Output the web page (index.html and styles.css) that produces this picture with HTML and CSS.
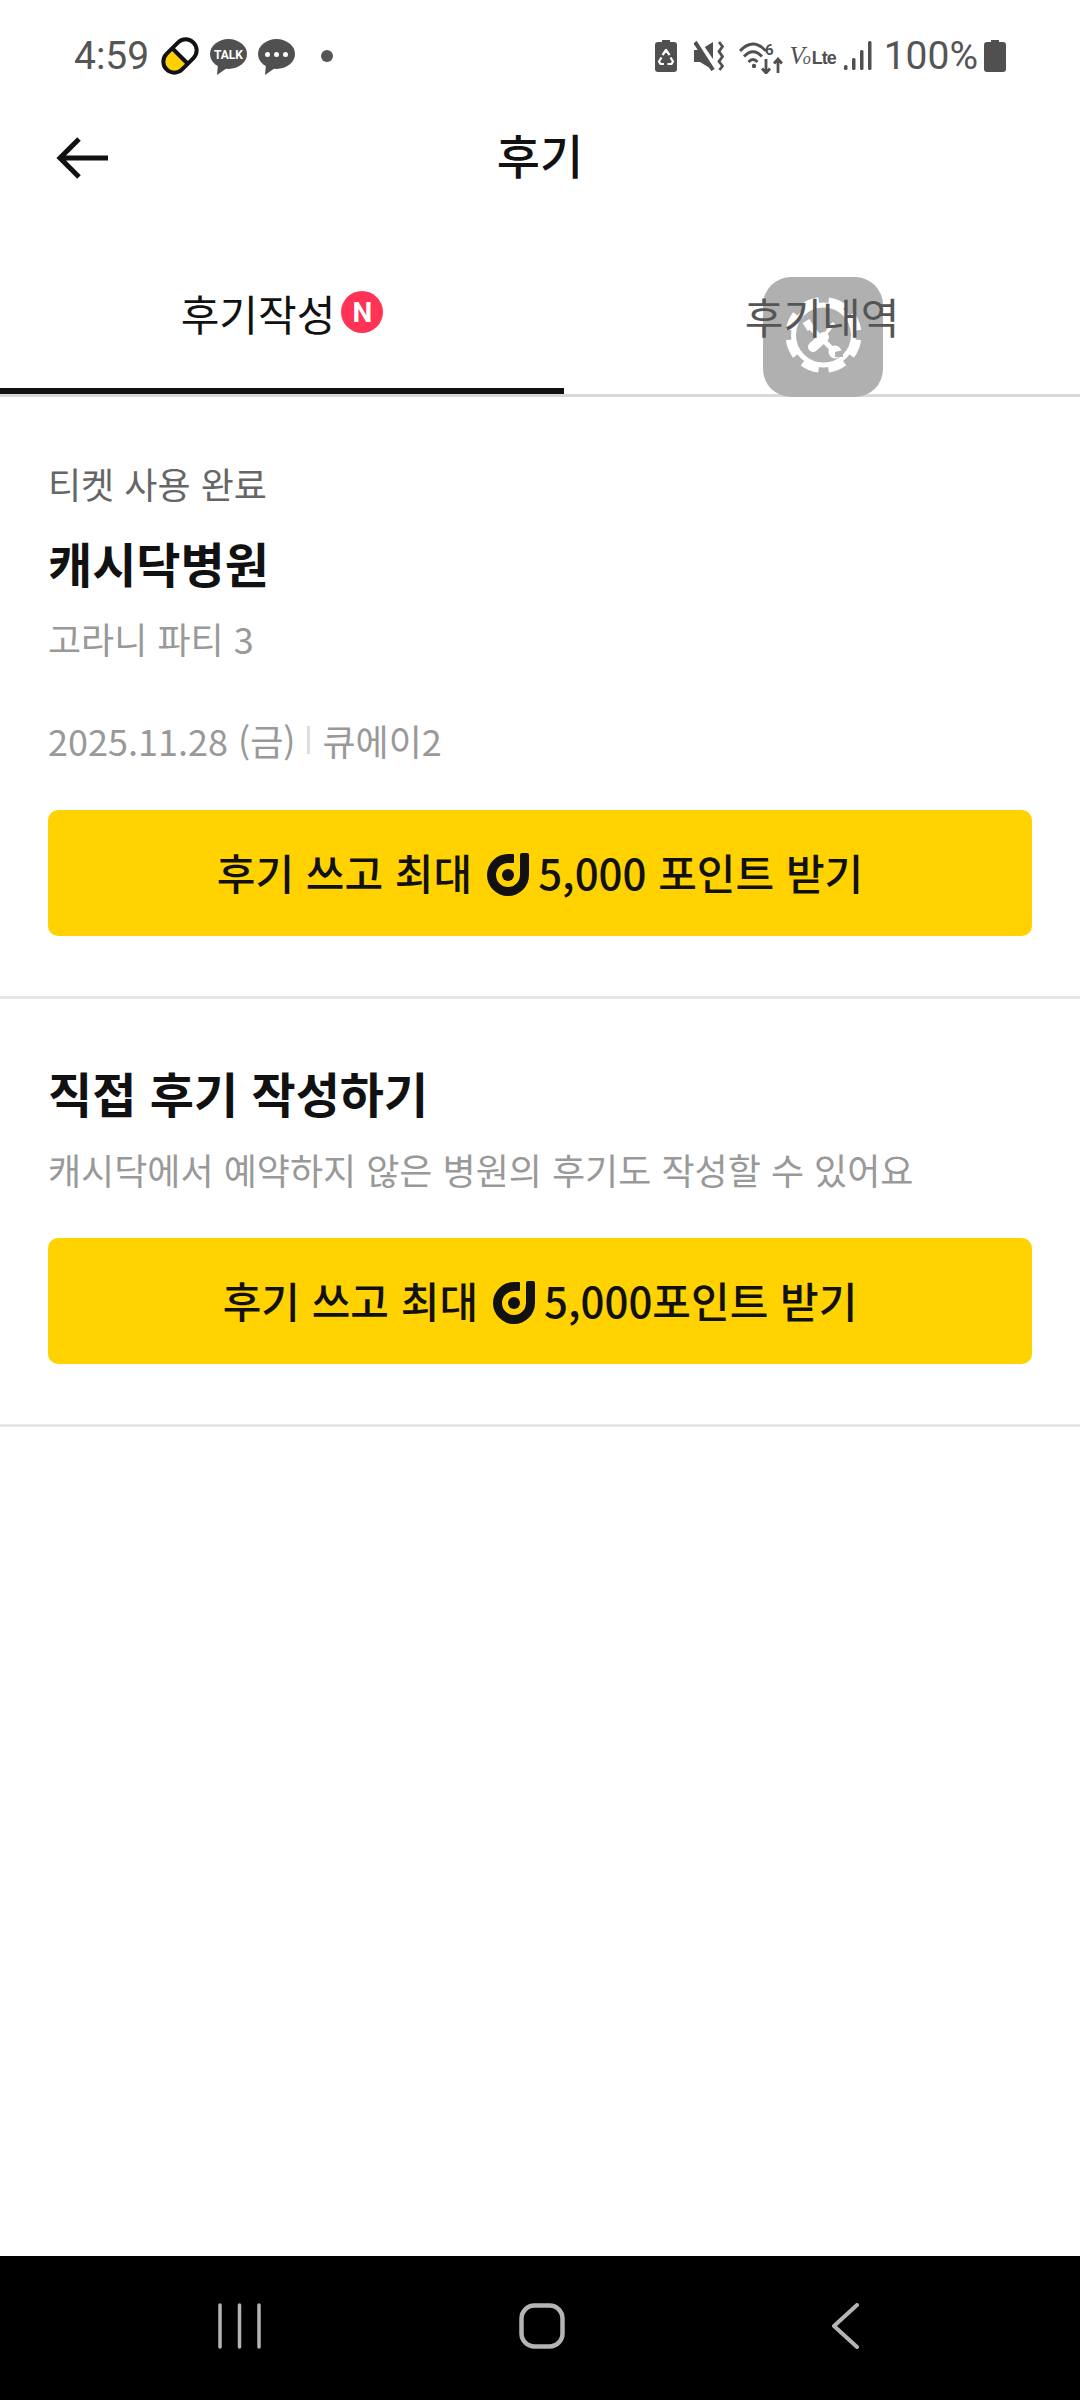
FILE: index.html
```html
<!DOCTYPE html>
<html lang="ko">
<head>
	<meta charset="utf-8">
	<title>후기</title>
	<link rel="stylesheet" href="styles.css">
</head>
<body>
	<div class="screen">
		<div class="statusBar">
			<div class="statusLeft">
				<span class="statusTime">4:59</span>
				<svg class="icon" width="38" height="40" viewBox="0 0 38 40">
					<g transform="rotate(45 19 20)">
						<rect x="8" y="1" width="22" height="38" rx="11" fill="#fff"/>
						<path d="M8 20h22v8a11 11 0 0 1-22 0z" fill="#ffd100"/>
						<rect x="8" y="1" width="22" height="38" rx="11" fill="none" stroke="#111" stroke-width="4"/>
						<path d="M8 20h22" stroke="#111" stroke-width="4"/>
					</g>
				</svg>
				<svg class="icon talkIcon" width="37" height="36" viewBox="0 0 37 36">
					<ellipse cx="18.500" cy="15" rx="18.500" ry="15" fill="#505050"/>
					<path d="M8 25l-1 11 10-7z" fill="#505050"/>
					<text x="18.500" y="19.500" text-anchor="middle" class="talkText">TALK</text>
				</svg>
				<svg class="icon talkIcon" width="37" height="36" viewBox="0 0 37 36">
					<ellipse cx="18.500" cy="15" rx="18.500" ry="15" fill="#505050"/>
					<path d="M8 25l-1 11 10-7z" fill="#505050"/>
					<circle cx="9.500" cy="15.500" r="2.500" fill="#fff"/>
					<circle cx="18.500" cy="15.500" r="2.500" fill="#fff"/>
					<circle cx="27.500" cy="15.500" r="2.500" fill="#fff"/>
				</svg>
				<span class="statusDot"></span>
			</div>
			<div class="statusRight">
				<svg class="icon" width="22" height="32" viewBox="0 0 22 32">
					<path d="M7 0h8v2h4a3 3 0 0 1 3 3v24a3 3 0 0 1-3 3H3a3 3 0 0 1-3-3V5a3 3 0 0 1 3-3h4z" fill="#505050"/>
					<path d="M7.500 15l3.500-5 3.500 5M15.500 17.500l2.500 4-1.500 2.500H12.500M9 24H5.500L4 21.500l2.500-4" fill="none" stroke="#fff" stroke-width="2.200" stroke-linejoin="round"/>
				</svg>
				<svg class="icon muteIcon" width="30" height="30" viewBox="0 0 30 30">
					<path d="M0 9h6l13-8v28L6 21H0z" fill="#505050"/>
					<path d="M3 -1l19 28" stroke="#fff" stroke-width="5"/>
					<path d="M1 1l18 28" stroke="#505050" stroke-width="4"/>
					<path d="M25 1l3.500 4.500-3.500 5 3.500 5-3.500 5 3.500 4.500-3 4" fill="none" stroke="#505050" stroke-width="2.800"/>
				</svg>
				<svg class="icon wifiIcon" width="44" height="32" viewBox="0 0 44 32">
					<path d="M1 9Q14-5 27 9M5 14.500Q14 5 23 14.500M9.500 20Q14 15 18.500 20" fill="none" stroke="#505050" stroke-width="2.800"/>
					<circle cx="15" cy="24" r="2.200" fill="#505050"/>
					<text x="26" y="13" class="wifiSix">6</text>
					<path d="M27 17v14M23 26.500l4 4.500 4-4.500M39 31V17M35 21.500l4-4.500 4 4.500" fill="none" stroke="#505050" stroke-width="2.800"/>
				</svg>
				<span class="volte"><span class="volteV">V<small>o</small></span><span class="volteLte">Lte</span></span>
				<svg class="icon signalIcon" width="28" height="30" viewBox="0 0 28 30">
					<rect x="0" y="24" width="3.500" height="5" rx="1.500" fill="#505050"/>
					<rect x="8" y="17" width="3.500" height="12" rx="1.500" fill="#505050"/>
					<rect x="16" y="9" width="3.500" height="20" rx="1.500" fill="#505050"/>
					<rect x="24" y="0" width="3.500" height="29" rx="1.500" fill="#505050"/>
				</svg>
				<span class="statusBattery">100%</span>
				<svg class="icon batteryIcon" width="22" height="32" viewBox="0 0 22 32">
					<path d="M7 0h8v2h4a3 3 0 0 1 3 3v24a3 3 0 0 1-3 3H3a3 3 0 0 1-3-3V5a3 3 0 0 1 3-3h4z" fill="#505050"/>
				</svg>
			</div>
		</div>

		<div class="topBar">
			<svg class="backArrow" width="56" height="46" viewBox="0 0 56 46">
				<path d="M53 23H5M24 4L5 23l19 19" fill="none" stroke="#111" stroke-width="5"/>
			</svg>
			<div class="pageTitle">후기</div>
		</div>

		<div class="tabs">
			<div class="tab tabActive">
				<span>후기작성</span>
				<span class="newBadge">N</span>
			</div>
			<div class="tab">
				<span class="tabLabel">후기내역</span>
			</div>
		</div>

		<div class="section ticketSection">
			<div class="ticketState">티켓 사용 완료</div>
			<div class="hospitalName">캐시닥병원</div>
			<div class="itemName">고라니 파티 3</div>
			<div class="visitInfo">
				<span>2025.11.28 (금)</span>
				<span class="visitSep"></span>
				<span>큐에이2</span>
			</div>
			<div class="reviewButton">
				<span>후기 쓰고 최대</span>
				<svg class="pointLogo" width="42" height="43" viewBox="0 0 42 43">
					<path d="M35 0h5a2 2 0 0 1 2 2v20a21 21 0 1 1-21-21h5a1 1 0 0 1 1 1v7a1 1 0 0 1-1 1h-5a12 12 0 1 0 12 12V2a2 2 0 0 1 2-2z" fill="#111"/>
					<circle cx="21" cy="22" r="6" fill="#111"/>
				</svg>
				<span>5,000 포인트 받기</span>
			</div>
		</div>

		<div class="section directSection">
			<div class="directTitle">직접 후기 작성하기</div>
			<div class="directDesc">캐시닥에서 예약하지 않은 병원의 후기도 작성할 수 있어요</div>
			<div class="reviewButton">
				<span>후기 쓰고 최대</span>
				<svg class="pointLogo" width="42" height="43" viewBox="0 0 42 43">
					<path d="M35 0h5a2 2 0 0 1 2 2v20a21 21 0 1 1-21-21h5a1 1 0 0 1 1 1v7a1 1 0 0 1-1 1h-5a12 12 0 1 0 12 12V2a2 2 0 0 1 2-2z" fill="#111"/>
					<circle cx="21" cy="22" r="6" fill="#111"/>
				</svg>
				<span>5,000포인트 받기</span>
			</div>
		</div>

		<div class="spacer"></div>

		<div class="navBar">
			<svg width="45" height="46" viewBox="0 0 45 46">
				<path d="M3 2v42M22.500 2v42M42 2v42" stroke="#b4b4b4" stroke-width="3.500" stroke-linecap="round"/>
			</svg>
			<svg class="navHome" width="46" height="46" viewBox="0 0 46 46">
				<rect x="2.500" y="2.500" width="41" height="41" rx="13" fill="none" stroke="#b4b4b4" stroke-width="4.500"/>
			</svg>
			<svg class="navBack" width="28" height="46" viewBox="0 0 28 46">
				<path d="M26 2L3 23l23 21" fill="none" stroke="#b4b4b4" stroke-width="4" stroke-linecap="round" stroke-linejoin="round"/>
			</svg>
		</div>

		<div class="floatButton">
			<svg width="120" height="120" viewBox="0 0 120 120">
				<rect width="120" height="120" rx="28" fill="#b0b0b0"/>
				<circle cx="60.500" cy="58" r="30" fill="none" stroke="#fff" stroke-width="5"/>
				<circle cx="60.500" cy="58" r="34" transform="rotate(8 60.500 58)" fill="none" stroke="#fff" stroke-width="8" stroke-dasharray="17 9.700"/>
				<path d="M47 50l24 24" stroke="#fff" stroke-width="5"/>
				<path d="M43 44l5 8" stroke="#fff" stroke-width="8"/>
				<circle cx="72" cy="75" r="6.500" fill="#fff"/>
				<path d="M72 75l8-2v7h-8z" fill="#b0b0b0"/>
				<path d="M50 70l11-10" stroke="#fff" stroke-width="10" stroke-linecap="round"/>
				<path d="M60 60l11-14" stroke="#fff" stroke-width="3.500"/>
			</svg>
		</div>
	</div>
</body>
</html>
```

FILE: styles.css
```css
html, body {
	margin: 0;
	padding: 0;
	background-color: #fff;
}

.screen {
	position: relative;
	display: flex;
	flex-direction: column;
	width: 1080px;
	height: 2400px;
	overflow: hidden;
	font-family: "Noto Sans CJK KR", "Noto Sans", sans-serif;
	color: #111;
}

.icon {
	display: block;
	flex: none;
}

/* status bar */
.statusBar {
	display: flex;
	justify-content: space-between;
	align-items: center;
	height: 112px;
	padding: 0 74px;
	box-sizing: border-box;
	font-family: Roboto, sans-serif;
	color: #555;
}

.statusLeft,
.statusRight {
	display: flex;
	align-items: center;
}

.statusTime {
	font-size: 39px;
	margin-right: 12px;
}

.talkIcon {
	margin-left: 11px;
	margin-top: 2px;
}

.talkText {
	font-family: Roboto, sans-serif;
	font-size: 12px;
	font-weight: 700;
	fill: #fff;
}

.statusDot {
	width: 12px;
	height: 12px;
	margin-left: 26px;
	border-radius: 50%;
	background-color: #555;
}

.muteIcon {
	margin-left: 17px;
}

.wifiIcon {
	margin-left: 15px;
	margin-top: 4px;
}

.wifiSix {
	font-family: Roboto, sans-serif;
	font-size: 15px;
	font-weight: 700;
	fill: #505050;
}

.volte {
	display: flex;
	align-items: baseline;
	margin-left: 6px;
	color: #505050;
}

.volteV {
	font-family: "Liberation Serif", serif;
	font-style: italic;
	font-size: 25px;
	letter-spacing: -2px;
}

.volteV small {
	font-size: 16px;
}

.volteLte {
	margin-left: 3px;
	font-family: "Liberation Sans", sans-serif;
	font-size: 18px;
	font-weight: 700;
	letter-spacing: -1px;
}

.signalIcon {
	margin-left: 8px;
}

.statusBattery {
	font-size: 39px;
	margin-left: 12px;
}

.batteryIcon {
	margin-left: 6px;
}

/* header */
.topBar {
	position: relative;
	display: flex;
	justify-content: center;
	align-items: center;
	height: 88px;
	padding-bottom: 6px;
	box-sizing: border-box;
}

.backArrow {
	position: absolute;
	left: 55px;
	top: 23px;
}

.pageTitle {
	font-size: 47px;
	font-weight: 500;
}

/* tabs */
.tabs {
	display: grid;
	grid-template-columns: 564px 1fr;
	height: 194px;
	border-bottom: 3px solid #d9d9d9;
}

.tab {
	display: flex;
	justify-content: center;
	align-items: center;
	gap: 6px;
	font-size: 42px;
	color: #555;
	padding-top: 36px;
	box-sizing: border-box;
}

.tabActive {
	color: #111;
	border-bottom: 6px solid #111;
}

/* the tool button floats over the tab, its label still reads on top */
.tabLabel {
	position: relative;
	z-index: 2;
}

.newBadge {
	display: flex;
	justify-content: center;
	align-items: center;
	width: 42px;
	height: 42px;
	border-radius: 50%;
	background-color: #ff3355;
	color: #fff;
	font-family: Roboto, sans-serif;
	font-size: 28px;
	font-weight: 700;
}

/* sections */
.section {
	display: flex;
	flex-direction: column;
	padding: 0 48px;
	border-bottom: 3px solid #e6e6e6;
}

.ticketSection {
	padding-top: 61px;
	padding-bottom: 60px;
}

.ticketState {
	font-size: 36px;
	line-height: 50px;
	color: #666;
}

.hospitalName {
	margin-top: 26px;
	font-size: 48px;
	line-height: 56px;
	font-weight: 700;
}

.itemName {
	margin-top: 23px;
	font-size: 36px;
	line-height: 50px;
	color: #999;
}

.visitInfo {
	display: flex;
	align-items: center;
	margin-top: 52px;
	font-size: 36px;
	line-height: 50px;
	color: #999;
}

.visitSep {
	width: 3px;
	height: 28px;
	margin: 0 12px;
	background-color: #ddd;
}

.reviewButton {
	display: flex;
	justify-content: center;
	align-items: center;
	height: 126px;
	margin-top: 45px;
	padding-bottom: 3px;
	box-sizing: border-box;
	border-radius: 10px;
	background-color: #ffd200;
	font-size: 42px;
	font-weight: 500;
}

.pointLogo {
	display: block;
	flex: none;
	margin: 5px 9px 0 15px;
}

.directSection {
	padding-top: 63px;
	padding-bottom: 60px;
}

.directTitle {
	font-size: 48px;
	line-height: 60px;
	font-weight: 700;
}

.directDesc {
	margin-top: 22px;
	font-size: 36px;
	line-height: 50px;
	color: #999;
}

.directSection .reviewButton {
	margin-top: 44px;
}

.spacer {
	flex: 1;
}

/* navigation bar */
.navBar {
	display: flex;
	align-items: center;
	height: 144px;
	padding: 0 0 4px 217px;
	box-sizing: border-box;
	background-color: #000;
}

.navHome {
	margin-left: 257px;
}

.navBack {
	margin-left: 266px;
}

.floatButton {
	position: absolute;
	left: 763px;
	top: 277px;
	z-index: 1;
	width: 120px;
	height: 120px;
}

.floatButton svg {
	display: block;
}
```
